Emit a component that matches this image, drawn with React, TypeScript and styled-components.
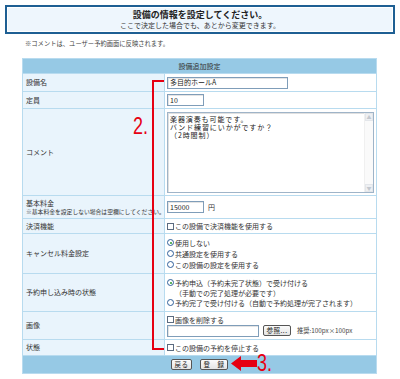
import React from "react";
import styled, { createGlobalStyle } from "styled-components";

const Global = createGlobalStyle`
  html, body { margin: 0; padding: 0; background: #fff; }
  body {
    font-family: "Noto Sans CJK JP", "Noto Sans", sans-serif;
    font-size: 7px;
    color: #333;
  }
`;

const Page = styled.div`
  position: relative;
  width: 400px;
  height: 379px;
  padding-top: 5px;
  box-sizing: border-box;
  overflow: hidden;
`;

const Banner = styled.div`
  margin: 0 5px;
  height: 29px;
  box-sizing: border-box;
  border: 2px solid #1e5f93;
  box-shadow: inset 0 0 0 1px #fff;
  background: #eef6fd;
  display: flex;
  flex-direction: column;
  align-items: center;
  justify-content: center;
  gap: 1px;
`;

const Title = styled.div`
  font-size: 9px;
  line-height: 10px;
  font-weight: bold;
  color: #222;
`;

const Sub = styled.div`
  font-size: 7px;
  line-height: 8px;
  color: #333;
`;

const Note = styled.div`
  margin: 6px 0 0 25px;
  font-size: 6.3px;
  line-height: 8px;
  color: #444;
`;

const Table = styled.table`
  margin: 10px 0 0 22px;
  width: 355px;
  border-collapse: collapse;
  table-layout: fixed;
  font-size: 7px;
  line-height: 9px;
`;

const LabelCol = styled.col`
  width: 142px;
`;

const HeadCell = styled.th<{ $foot?: boolean }>`
  background: #96c9e5;
  border: 1px solid #b8dbef;
  font-weight: normal;
  color: #333;
  text-align: ${(p) => (p.$foot ? "left" : "center")};
  padding: 0 0 0 ${(p) => (p.$foot ? "148px" : "0")};
`;

const Row = styled.tr<{ $h: number }>`
  height: ${(p) => p.$h}px;
`;

const Label = styled.td`
  background: #e9f4fc;
  border: 1px solid #b8dbef;
  padding: 0 0 0 3px;
  vertical-align: middle;
  color: #333;
  white-space: nowrap;
  overflow: hidden;
`;

const Value = styled.td`
  background: #fff;
  border: 1px solid #b8dbef;
  padding: 0 0 0 2px;
  vertical-align: middle;
  color: #333;
  white-space: nowrap;
`;

const SmallNote = styled.div`
  font-size: 5.8px;
  line-height: 7px;
`;

const TextInput = styled.div<{ $w: number }>`
  display: inline-flex;
  align-items: center;
  box-sizing: border-box;
  width: ${(p) => p.$w}px;
  height: 12px;
  border: 1px solid #7f9db9;
  box-shadow: inset 1px 1px 0 #e4e4e4;
  padding-left: 2px;
  font-size: 7px;
  color: #222;
  vertical-align: middle;
`;

const Inline = styled.div`
  display: flex;
  align-items: center;
  gap: 4px;
`;

const TextAreaBox = styled.div`
  display: flex;
  box-sizing: border-box;
  width: 207px;
  height: 81px;
  border: 1px solid #9fb4c8;
  box-shadow: inset 1px 1px 0 #e0e0e0;
`;

const TextAreaText = styled.div`
  flex: 1;
  padding: 2px 0 0 2px;
  font-size: 7px;
  line-height: 8px;
  letter-spacing: 0.9px;
  color: #222;
  white-space: pre;
`;

const ScrollTrack = styled.div`
  width: 8px;
  background: #fafafa;
  border-left: 1px solid #f0f0f0;
  display: flex;
  flex-direction: column;
  justify-content: space-between;
`;

const ScrollBtn = styled.div`
  height: 8px;
  background: #eef0f3;
  border: 1px solid #e3e6ea;
  box-sizing: border-box;
  display: flex;
  align-items: center;
  justify-content: center;
  color: #c3c8cf;
  font-size: 5px;
  line-height: 5px;
`;

const OptionList = styled.div<{ $gap: number }>`
  display: flex;
  flex-direction: column;
  gap: ${(p) => p.$gap}px;
`;

const Option = styled.div`
  display: flex;
  align-items: flex-start;
  gap: 1px;
  line-height: 10px;
`;

const Box = styled.span`
  flex: none;
  display: inline-block;
  width: 7px;
  height: 7px;
  margin-top: 1.5px;
  border: 1px solid #5b6b80;
  background: #fff;
  box-sizing: border-box;
`;

const Radio = styled.span<{ $on?: boolean }>`
  flex: none;
  position: relative;
  display: inline-block;
  width: 7px;
  height: 7px;
  margin-top: 1.5px;
  border: 1px solid #2f5f9a;
  border-radius: 50%;
  background: #fff;
  box-sizing: border-box;
  &::after {
    content: "";
    display: ${(p) => (p.$on ? "block" : "none")};
    position: absolute;
    left: 1.5px;
    top: 1.5px;
    width: 2px;
    height: 2px;
    border-radius: 50%;
    background: #2d9b2d;
  }
`;

const Btn = styled.span<{ $w: number }>`
  display: inline-flex;
  align-items: center;
  justify-content: center;
  box-sizing: border-box;
  width: ${(p) => p.$w}px;
  height: 11px;
  border: 1px solid #555;
  border-radius: 2px;
  background: linear-gradient(#fbfbfb, #e4e4e4);
  font-size: 6.5px;
  color: #222;
  letter-spacing: 0.5px;
  vertical-align: middle;
`;

const FootBtns = styled.div`
  display: flex;
  gap: 8px;
  align-items: center;
`;

const Hint = styled.span`
  font-size: 6.3px;
  color: #444;
  margin-left: 2px;
`;

const Bracket = styled.div`
  position: absolute;
  left: 152px;
  top: 80px;
  width: 10px;
  height: 266px;
  border: 2px solid #e60012;
  border-right: none;
`;

const Mark = styled.div<{ $x: number; $y: number }>`
  position: absolute;
  left: ${(p) => p.$x}px;
  top: ${(p) => p.$y}px;
  font-family: "Liberation Sans", Arial, sans-serif;
  font-size: 23px;
  line-height: 23px;
  color: #e60012;
  transform: scaleX(0.78);
  transform-origin: left top;
`;

const Arrow = styled.svg`
  position: absolute;
  left: 231px;
  top: 356px;
`;

export default function App() {
  return (
    <Page>
      <Global />
      <Banner>
        <Title>設備の情報を設定してください。</Title>
        <Sub>ここで決定した場合でも、あとから変更できます。</Sub>
      </Banner>
      <Note>※コメントは、ユーザー予約画面に反映されます。</Note>
      <Table>
        <colgroup>
          <LabelCol />
          <col />
        </colgroup>
        <tbody>
          <Row $h={15}>
            <HeadCell colSpan={2}>設備追加設定</HeadCell>
          </Row>
          <Row $h={18}>
            <Label>設備名</Label>
            <Value>
              <TextInput $w={121}>多目的ホールA</TextInput>
            </Value>
          </Row>
          <Row $h={17}>
            <Label>定員</Label>
            <Value>
              <TextInput $w={37}>10</TextInput>
            </Value>
          </Row>
          <Row $h={87}>
            <Label>コメント</Label>
            <Value>
              <TextAreaBox>
                <TextAreaText>{"楽器演奏も可能です。\nバンド練習にいかがですか？\n（2時間制）"}</TextAreaText>
                <ScrollTrack>
                  <ScrollBtn>▲</ScrollBtn>
                  <ScrollBtn>▼</ScrollBtn>
                </ScrollTrack>
              </TextAreaBox>
            </Value>
          </Row>
          <Row $h={23}>
            <Label>
              <div>基本料金</div>
              <SmallNote>※基本料金を設定しない場合は空欄にしてください。</SmallNote>
            </Label>
            <Value>
              <Inline>
                <TextInput $w={37}>15000</TextInput>
                <span>円</span>
              </Inline>
            </Value>
          </Row>
          <Row $h={15}>
            <Label>決済機能</Label>
            <Value>
              <Option>
                <Box />
                <span>この設備で決済機能を使用する</span>
              </Option>
            </Value>
          </Row>
          <Row $h={40}>
            <Label>キャンセル料金設定</Label>
            <Value>
              <OptionList $gap={1}>
                <Option>
                  <Radio $on />
                  <span>使用しない</span>
                </Option>
                <Option>
                  <Radio />
                  <span>共通設定を使用する</span>
                </Option>
                <Option>
                  <Radio />
                  <span>この設備の設定を使用する</span>
                </Option>
              </OptionList>
            </Value>
          </Row>
          <Row $h={38}>
            <Label>予約申し込み時の状態</Label>
            <Value>
              <OptionList $gap={0}>
                <Option>
                  <Radio $on />
                  <span>
                    予約申込（予約未完了状態）で受け付ける
                    <br />
                    （手動での完了処理が必要です）
                  </span>
                </Option>
                <Option>
                  <Radio />
                  <span>予約完了で受け付ける（自動で予約処理が完了されます）</span>
                </Option>
              </OptionList>
            </Value>
          </Row>
          <Row $h={28}>
            <Label>画像</Label>
            <Value>
              <OptionList $gap={0}>
                <Option>
                  <Box />
                  <span>画像を削除する</span>
                </Option>
                <Inline>
                  <TextInput $w={92} />
                  <Btn $w={28}>参照...</Btn>
                  <Hint>推奨:100px×100px</Hint>
                </Inline>
              </OptionList>
            </Value>
          </Row>
          <Row $h={16}>
            <Label>状態</Label>
            <Value>
              <Option>
                <Box />
                <span>この設備の予約を停止する</span>
              </Option>
            </Value>
          </Row>
          <Row $h={18}>
            <HeadCell colSpan={2} $foot>
              <FootBtns>
                <Btn $w={21}>戻る</Btn>
                <Btn $w={28}>登　録</Btn>
              </FootBtns>
            </HeadCell>
          </Row>
        </tbody>
      </Table>
      <Bracket />
      <Mark $x={133} $y={115}>2.</Mark>
      <Arrow width="26" height="15" viewBox="0 0 26 15">
        <polygon points="0,7.5 10,0 10,4 26,4 26,11 10,11 10,15" fill="#e60012" />
      </Arrow>
      <Mark $x={257} $y={352}>3.</Mark>
    </Page>
  );
}
